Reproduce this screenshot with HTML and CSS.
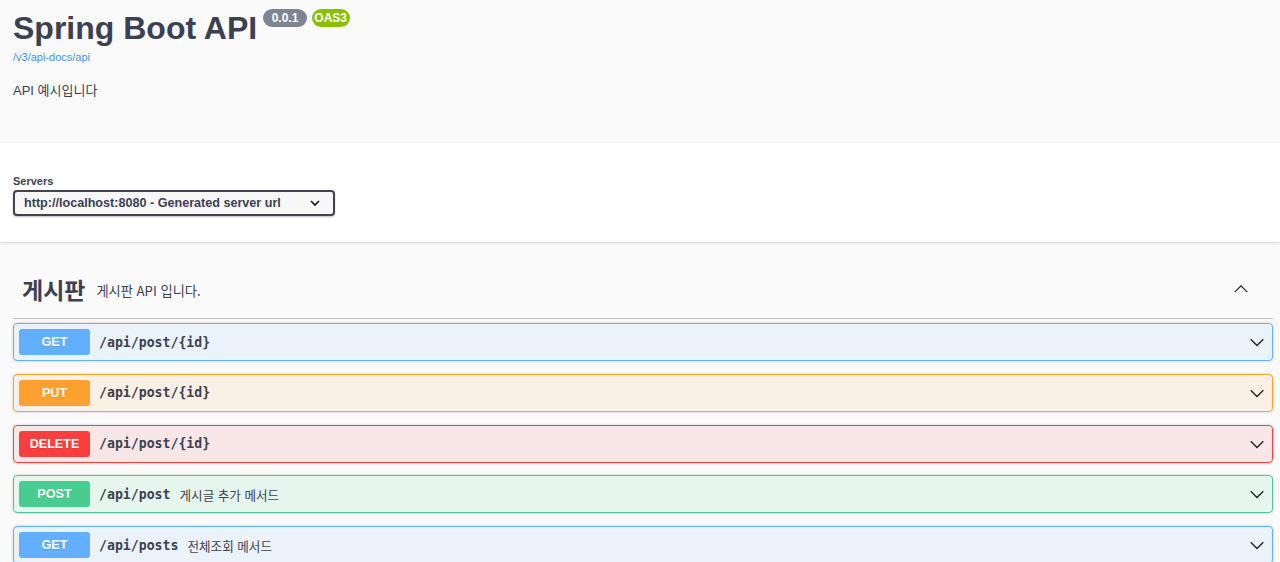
FILE: index.html
```html
<!DOCTYPE html>
<html lang="ko">
<head>
<meta charset="utf-8">
<title>Spring Boot API</title>
<link rel="stylesheet" href="styles.css">
</head>
<body>
<div class="page">
  <section class="info">
    <div class="wrap">
      <h1 class="title">Spring Boot API<span class="stamp version">0.0.1</span><span class="stamp oas">OAS3</span></h1>
      <a class="spec-link" href="#">/v3/api-docs/api</a>
      <p class="desc">API 예시입니다</p>
    </div>
  </section>

  <section class="schemes">
    <div class="wrap">
      <div class="servers-label">Servers</div>
      <div class="select">
        <span>http://localhost:8080 - Generated server url</span>
        <svg class="select-arrow" viewBox="0 0 10 6" width="10" height="6"><polyline points="1,1 5,5 9,1" fill="none" stroke="#111" stroke-width="1.6"/></svg>
      </div>
    </div>
  </section>

  <section class="ops">
    <div class="wrap">
      <div class="tag-header">
        <span class="tag-name">게시판</span>
        <span class="tag-desc">게시판 API 입니다.</span>
        <svg class="tag-arrow" viewBox="0 0 20 20" width="18" height="18"><polyline points="3,13.5 10,6.5 17,13.5" fill="none" stroke="#222" stroke-width="1.4"/></svg>
      </div>

      <div class="opblock get">
        <span class="method">GET</span>
        <span class="path">/api/post/{id}</span>
        <span class="op-desc"></span>
        <svg class="op-arrow" viewBox="0 0 20 20" width="18" height="18"><polyline points="3,7 10,14 17,7" fill="none" stroke="#222" stroke-width="1.5"/></svg>
      </div>
      <div class="opblock put">
        <span class="method">PUT</span>
        <span class="path">/api/post/{id}</span>
        <span class="op-desc"></span>
        <svg class="op-arrow" viewBox="0 0 20 20" width="18" height="18"><polyline points="3,7 10,14 17,7" fill="none" stroke="#222" stroke-width="1.5"/></svg>
      </div>
      <div class="opblock delete">
        <span class="method">DELETE</span>
        <span class="path">/api/post/{id}</span>
        <span class="op-desc"></span>
        <svg class="op-arrow" viewBox="0 0 20 20" width="18" height="18"><polyline points="3,7 10,14 17,7" fill="none" stroke="#222" stroke-width="1.5"/></svg>
      </div>
      <div class="opblock post">
        <span class="method">POST</span>
        <span class="path">/api/post</span>
        <span class="op-desc">게시글 추가 메서드</span>
        <svg class="op-arrow" viewBox="0 0 20 20" width="18" height="18"><polyline points="3,7 10,14 17,7" fill="none" stroke="#222" stroke-width="1.5"/></svg>
      </div>
      <div class="opblock get">
        <span class="method">GET</span>
        <span class="path">/api/posts</span>
        <span class="op-desc">전체조회 메서드</span>
        <svg class="op-arrow" viewBox="0 0 20 20" width="18" height="18"><polyline points="3,7 10,14 17,7" fill="none" stroke="#222" stroke-width="1.5"/></svg>
      </div>
    </div>
  </section>
</div>
</body>
</html>
```

FILE: styles.css
```css
* { box-sizing: border-box; }

html, body {
  margin: 0;
  padding: 0;
  background: #fafafa;
  color: #3b4151;
  font-family: "Liberation Sans", "Noto Sans CJK KR", sans-serif;
}

.wrap {
  padding: 0 7px 0 13px;
}

/* info */
.info {
  background: #fafafa;
  padding-top: 9px;
  padding-bottom: 43px;
}

.title {
  margin: 0;
  font-size: 32px;
  line-height: 38px;
  font-weight: 700;
  color: #3b4151;
  display: flex;
  align-items: flex-start;
}

.stamp {
  display: inline-block;
  height: 18px;
  line-height: 18px;
  border-radius: 57px;
  color: #fff;
  font-size: 12px;
  font-weight: 700;
  margin-left: 5px;
  padding: 0 8.5px;
}

.stamp.version { background: #7d8492; margin-left: 6px; }
.stamp.oas { background: #89bf04; padding: 0 2.5px; }

.spec-link {
  display: block;
  margin-top: 3px;
  font-size: 11px;
  line-height: 14px;
  color: #4990e2;
  text-decoration: none;
}

.desc {
  margin: 18px 0 0;
  font-size: 13px;
  line-height: 18px;
  color: #3b4151;
}

/* servers */
.schemes {
  background: #fff;
  padding-top: 31px;
  padding-bottom: 26px;
  box-shadow: 0 1px 2px 0 rgba(0, 0, 0, 0.15);
  position: relative;
}

.servers-label {
  font-size: 11px;
  line-height: 14px;
  font-weight: 700;
  color: #3b4151;
}

.select {
  margin-top: 2px;
  width: 322px;
  height: 26px;
  border: 2px solid #41444e;
  border-radius: 4px;
  background: #f7f7f7;
  box-shadow: 0 1px 2px 0 rgba(0, 0, 0, 0.25);
  display: flex;
  align-items: center;
  justify-content: space-between;
  padding: 0 13px 0 9px;
  font-size: 12.6px;
  font-weight: 700;
  color: #3b4151;
}

.select-arrow { display: block; }

/* operations */
.ops {
  padding-top: 18px;
}

.tag-header {
  display: flex;
  align-items: center;
  height: 59px;
  padding: 9px 23px 9px 9px;
  border-bottom: 1px solid rgba(59, 65, 81, 0.3);
  margin-bottom: 4px;
}

.tag-name {
  font-family: "Noto Sans CJK KR", sans-serif;
  font-size: 23px;
  font-weight: 700;
  color: #3b4151;
}

.tag-desc {
  font-family: "Noto Sans CJK KR", sans-serif;
  font-size: 13.2px;
  padding: 3px 11px 0;
  flex: 1;
  color: #3b4151;
}

.tag-arrow { display: block; }

.opblock {
  display: flex;
  align-items: center;
  height: 38px;
  padding: 5px 6px 5px 5px;
  border: 1px solid;
  border-radius: 4px;
  box-shadow: 0 0 3px rgba(0, 0, 0, 0.19);
  margin-bottom: 12.75px;
}

.method {
  width: 71px;
  height: 26px;
  line-height: 26px;
  border-radius: 3px;
  text-align: center;
  color: #fff;
  font-size: 12.6px;
  font-weight: 700;
  text-shadow: 0 1px 0 rgba(0, 0, 0, 0.1);
  flex: none;
}

.path {
  font-family: "DejaVu Sans Mono", "Liberation Mono", monospace;
  font-size: 13.2px;
  font-weight: 700;
  color: #3b4151;
  padding: 0 9px;
}

.op-desc {
  flex: 1;
  font-family: "Noto Sans CJK KR", sans-serif;
  font-size: 12.6px;
  color: #3b4151;
}

.op-arrow { display: block; flex: none; }

.opblock.get { border-color: #61affe; background: rgba(97, 175, 254, 0.1); }
.opblock.get .method { background: #61affe; }

.opblock.put { border-color: #fca130; background: rgba(252, 161, 48, 0.1); }
.opblock.put .method { background: #fca130; }

.opblock.delete { border-color: #f93e3e; background: rgba(249, 62, 62, 0.1); }
.opblock.delete .method { background: #f93e3e; }

.opblock.post { border-color: #49cc90; background: rgba(73, 204, 144, 0.1); }
.opblock.post .method { background: #49cc90; }
```
